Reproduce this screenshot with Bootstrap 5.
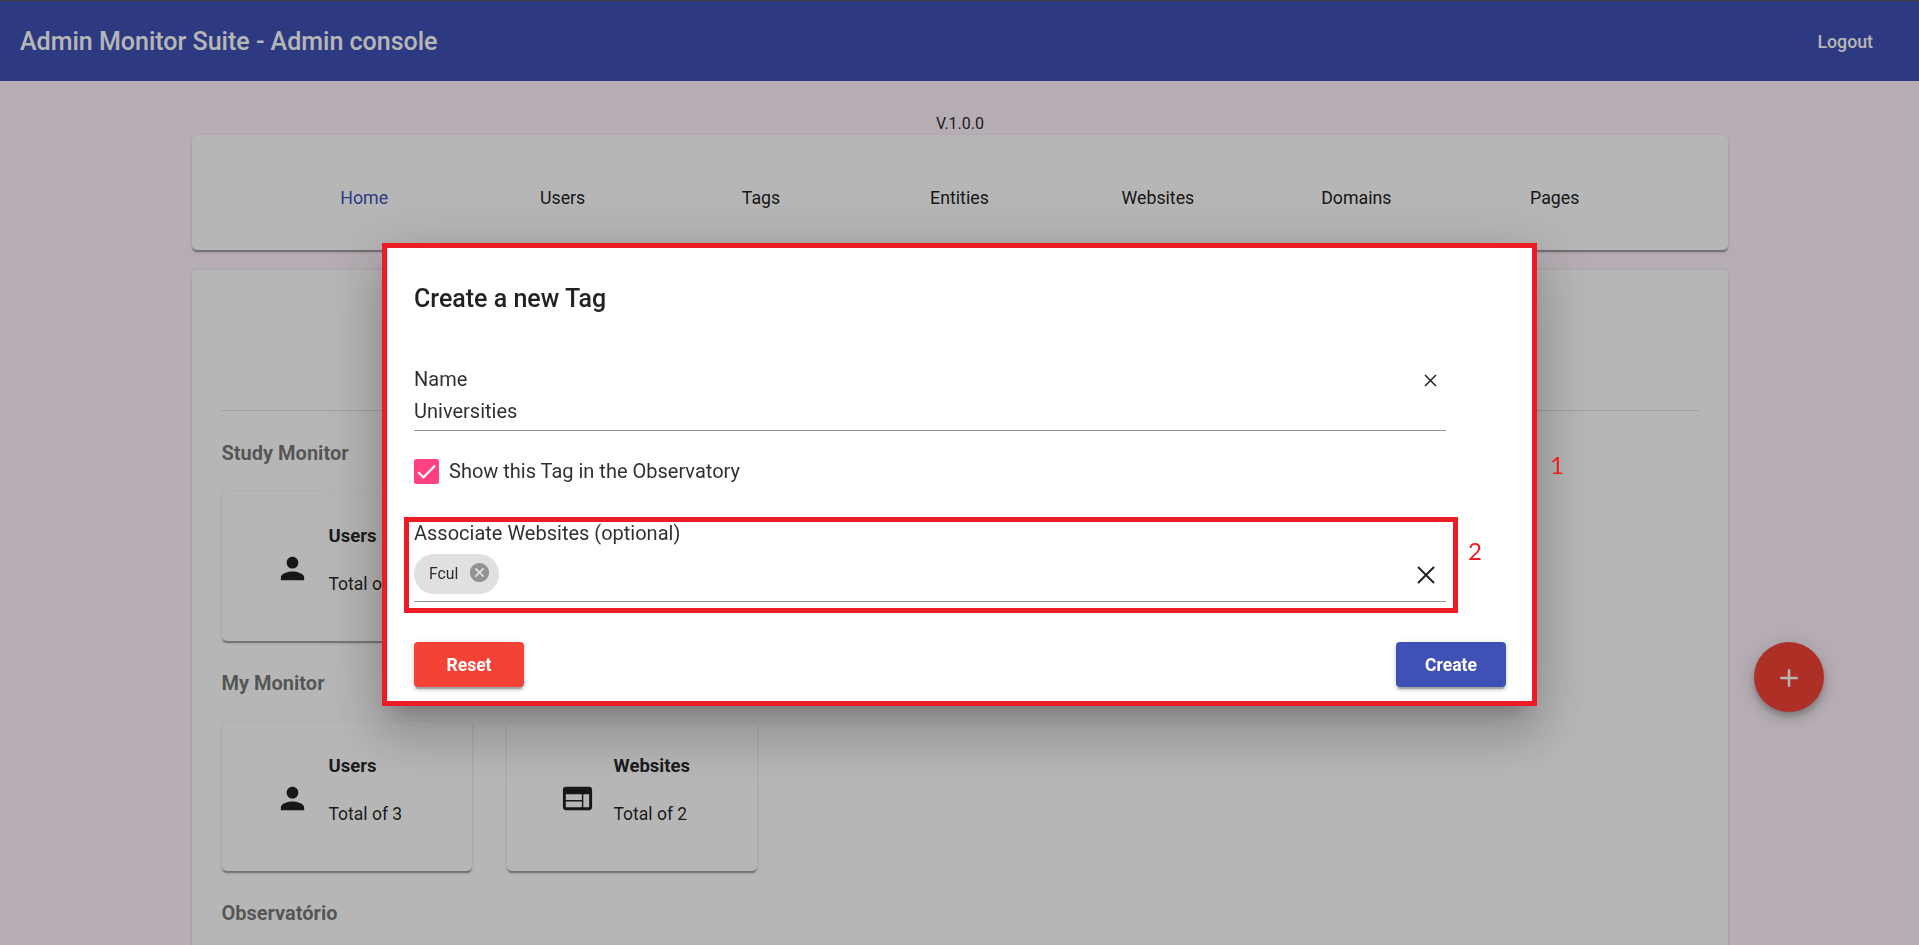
<!DOCTYPE html>
<html lang="en">
<head>
<meta charset="utf-8">
<meta name="viewport" content="width=device-width, initial-scale=1">
<title>Admin Monitor Suite - Admin console</title>
<link href="https://cdn.jsdelivr.net/npm/bootstrap@5.3.0/dist/css/bootstrap.min.css" rel="stylesheet">
<style>
  body { font-family: Roboto, "Liberation Sans", sans-serif; background: #fef3fb; color: rgba(0,0,0,.87); height: 945px; overflow: hidden; }
  .topbar { height: 81px; background: #3f51b5; border-top: 1px solid #555; padding: 2px 46px 0 20px; }
  .topbar .brand { font-size: 25px; font-weight: 500; }
  .topbar .logout { font-size: 17.75px; font-weight: 500; }
  .version { font-size: 16px; line-height: 24px; padding: 31px 0 0 1px; margin-bottom: -1px; }
  .viewport { height: 864px; overflow: hidden; }
  .page { width: 1536px; }
  .panel { background: #fff; border-radius: 5px; box-shadow: 0 2.5px 1.25px -1.25px rgba(0,0,0,.2), 0 1.25px 1.25px rgba(0,0,0,.14), 0 1.25px 3.75px rgba(0,0,0,.12); }
  .menu { height: 115px; padding: 12px 73.5px 0 73.5px; margin-bottom: 20px; }
  .menu a { flex: 1 1 0; text-align: center; color: rgba(0,0,0,.9); text-decoration: none; font-size: 17.75px; font-weight: 400; }
  .menu a.current { color: #3f51b5; }
  .stats { height: 690px; padding: 140px 30px 0; }
  .rule { border-top: 1px solid rgba(0,0,0,.12); padding-top: 27px; }
  .heading { font-size: 20px; line-height: 30px; font-weight: 700; color: rgba(0,0,0,.54); margin: 0 0 23px; }
  .tiles { gap: 35px; margin-bottom: 27px; }
  .tile { width: 250px; height: 150px; padding: 0 0 0 53px; gap: 18px; }
  .tile svg { width: 35px; height: 35px; fill: currentColor; margin-top: 5px; }
  .tile b, .tile span { display: block; font-size: 17.5px; line-height: 24px; }
  .tile b { font-size: 18.5px; margin-bottom: 24px; }
  .tile div { margin-top: -12px; padding-left: 1px; }
  .fab { position: fixed; left: 1754px; top: 642px; width: 70px; height: 70px; background: #f44336; color: #fff; box-shadow: 0 3.75px 6.25px -1.25px rgba(0,0,0,.2), 0 7.5px 12.5px rgba(0,0,0,.14), 0 1.25px 22.5px rgba(0,0,0,.12); }
  .fab svg { width: 30px; height: 30px; margin-top: 1px; fill: currentColor; }
  .scrim { position: fixed; inset: 0; background: rgba(0,0,0,.288); padding-top: 243px; }
  .dialog-box { position: relative; width: 1155px; height: 463px; background: #fff; border: 5px solid #ed1c24; padding: 31px 26px 0 27px; color: rgba(0,0,0,.82);
    box-shadow: 0 13.75px 18.75px -8.75px rgba(0,0,0,.2), 0 30px 47.5px 3.75px rgba(0,0,0,.14), 0 11.25px 57.5px 10px rgba(0,0,0,.12); font-size: 20px; }
  .dialog-box h1 { font-size: 25px; line-height: 40px; font-weight: 500; color: rgba(0,0,0,.87); margin: 0 0 44px; }
  .field { width: 1032px; border-bottom: 1px solid #949494; }
  .name-field { height: 68px; line-height: 32px; margin-bottom: 28px; }
  .clear { padding: 0; border: 0; background: none; line-height: 0; color: rgba(0,0,0,.87); }
  .clear-name { padding: 3px 9px 0 0; }
  .clear-sites { padding: 0 11px 17px 0; }
  .tick { width: 25px; height: 25px; background: #ff4081; border-radius: 2.5px; }
  .check-row { height: 25px; gap: 10px; margin-bottom: 33px; line-height: 25px; }
  .marked { width: 1054px; height: 96px; border: 5px solid #ed1c24; margin: 0 0 29px -10px; padding: 0 5px; line-height: 22px; }
  .marked .field { height: 80px; }
  .chip { height: 40px; width: 85px; margin-top: 10px; padding: 0 8px 0 15px; background: #e0e0e0; border-radius: 20px; font-size: 15.75px; }
  .chip svg { margin-top: -3px; }
  .act { width: 110px; height: 45px; border: 0; border-radius: 4px; padding: 2px 0 0; color: #fff; font-size: 17.5px; font-weight: 700; box-shadow: 0 3.75px 1.25px -2.5px rgba(0,0,0,.2), 0 2.5px 2.5px rgba(0,0,0,.14), 0 1.25px 6.25px rgba(0,0,0,.12); }
  .act.warn { background: #f44336; }
  .act.go { background: #3f51b5; }
  .callout { position: absolute; color: #ed1c24; font: 24px/30px Lato, sans-serif; }
  .one { left: 1163px; top: 202px; }
  .two { left: 1081px; top: 288px; }
</style>
</head>
<body>
<header class="topbar d-flex align-items-center justify-content-between text-white">
  <span class="brand">Admin Monitor Suite - Admin console</span>
  <span class="logout">Logout</span>
</header>

<div class="viewport">
<main class="page mx-auto">
  <div class="version text-center">V.1.0.0</div>
  <nav class="panel menu d-flex align-items-center">
    <a class="current" href="#">Home</a><a href="#">Users</a><a href="#">Tags</a><a href="#">Entities</a><a href="#">Websites</a><a href="#">Domains</a><a href="#">Pages</a>
  </nav>
  <section class="panel stats">
    <div class="rule">
      <h2 class="heading">Study Monitor</h2>
      <div class="tiles d-flex">
        <div class="panel tile d-flex align-items-center">
          <svg viewBox="0 0 24 24"><path d="M12 12c2.21 0 4-1.79 4-4s-1.79-4-4-4-4 1.79-4 4 1.79 4 4 4zm0 2c-2.67 0-8 1.34-8 4v2h16v-2c0-2.66-5.33-4-8-4z"/></svg>
          <div><b>Users</b><span>Total of 1</span></div>
        </div>
      </div>
      <h2 class="heading">My Monitor</h2>
      <div class="tiles d-flex">
        <div class="panel tile d-flex align-items-center">
          <svg viewBox="0 0 24 24"><path d="M12 12c2.21 0 4-1.79 4-4s-1.79-4-4-4-4 1.79-4 4 1.79 4 4 4zm0 2c-2.67 0-8 1.34-8 4v2h16v-2c0-2.66-5.33-4-8-4z"/></svg>
          <div><b>Users</b><span>Total of 3</span></div>
        </div>
        <div class="panel tile d-flex align-items-center">
          <svg viewBox="0 0 24 24"><path d="M20 4H4c-1.1 0-1.99.9-1.99 2L2 18c0 1.1.9 2 2 2h16c1.1 0 2-.9 2-2V6c0-1.1-.9-2-2-2zm-5 14H4v-4h11v4zm0-5H4V9h11v4zm5 5h-4V9h4v9z"/></svg>
          <div><b>Websites</b><span>Total of 2</span></div>
        </div>
      </div>
      <h2 class="heading mb-0">Observatório</h2>
    </div>
  </section>
</main>
</div>

<button class="fab btn rounded-circle border-0 p-0 d-flex align-items-center justify-content-center" type="button" aria-label="Add">
  <svg viewBox="0 0 24 24"><path d="M19 13h-6v6h-2v-6H5v-2h6V5h2v6h6v2z"/></svg>
</button>

<div class="scrim d-flex justify-content-center align-items-start">
  <div class="dialog-box" role="dialog">
    <h1>Create a new Tag</h1>
    <div class="field name-field d-flex justify-content-between">
      <div><div>Name</div><div>Universities</div></div>
      <button class="clear clear-name align-self-start mt-2" type="button" aria-label="Clear name">
        <svg width="13" height="13" viewBox="0 0 13 13" stroke="currentColor" stroke-width="1.5"><path d="M1 1l11 11M12 1L1 12"/></svg>
      </button>
    </div>
    <div class="check-row d-flex align-items-center">
      <span class="tick d-flex"><svg width="25" height="25" viewBox="0 0 24 24" fill="none" stroke="#fff" stroke-width="2.15"><path d="M4.1 12.7L9 17.6 20.3 6.3"/></svg></span>
      <span>Show this Tag in the Observatory</span>
    </div>
    <div class="marked">
      <div class="field d-flex justify-content-between">
        <div>
          <div>Associate Websites (optional)</div>
          <div class="chip d-flex align-items-center justify-content-between">
            <span>Fcul</span>
            <svg width="23" height="23" viewBox="0 0 24 24" fill="#929292"><path d="M12 2C6.47 2 2 6.47 2 12s4.47 10 10 10 10-4.47 10-10S17.53 2 12 2zm5 13.59L15.59 17 12 13.41 8.41 17 7 15.59 10.59 12 7 8.41 8.41 7 12 10.59 15.59 7 17 8.41 13.41 12 17 15.59z"/></svg>
          </div>
        </div>
        <button class="clear clear-sites align-self-end" type="button" aria-label="Clear websites">
          <svg width="18" height="18" viewBox="0 0 18 18" stroke="currentColor" stroke-width="2"><path d="M1 1l16 16M17 1L1 17"/></svg>
        </button>
      </div>
    </div>
    <div class="d-flex justify-content-between">
      <button class="act warn" type="button">Reset</button>
      <button class="act go" type="button">Create</button>
    </div>
    <span class="callout one">1</span>
    <span class="callout two">2</span>
  </div>
</div>
<script src="https://cdn.jsdelivr.net/npm/bootstrap@5.3.0/dist/js/bootstrap.bundle.min.js"></script>
</body>
</html>
